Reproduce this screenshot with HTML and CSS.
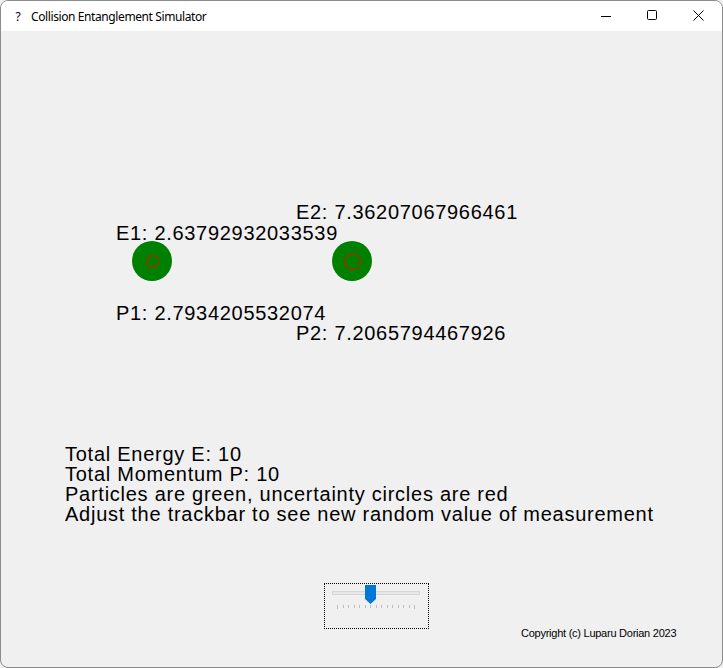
FILE: index.html
```html
<!DOCTYPE html>
<html>
<head>
<meta charset="utf-8">
<link rel="stylesheet" href="styles.css">
</head>
<body>
<div class="window">
  <div class="titlebar">
    <span class="appicon">?</span>
    <span class="title">Collision Entanglement Simulator</span>
    <div class="controls">
      <svg class="ctl" width="46" height="30" viewBox="0 0 46 30"><line x1="17" y1="15.5" x2="27" y2="15.5" stroke="#000" stroke-width="1"/></svg>
      <svg class="ctl" width="46" height="30" viewBox="0 0 46 30"><rect x="17.5" y="9.5" width="9" height="9" rx="1" fill="none" stroke="#000" stroke-width="1"/></svg>
      <svg class="ctl" width="46" height="30" viewBox="0 0 46 30"><path d="M17.5 9.5 L27.5 19.5 M27.5 9.5 L17.5 19.5" stroke="#000" stroke-width="1"/></svg>
    </div>
  </div>
  <div class="client">
    <div class="diagram">
      <div class="label e2">E2: 7.36207067966461</div>
      <div class="label e1">E1: 2.63792932033539</div>
      <div class="particle p-one"><div class="unc unc-one"></div></div>
      <div class="particle p-two"><div class="unc unc-two"></div></div>
      <div class="label m1">P1: 2.7934205532074</div>
      <div class="label m2">P2: 7.2065794467926</div>
    </div>
    <div class="info">
      <div class="line">Total Energy E: 10</div>
      <div class="line">Total Momentum P: 10</div>
      <div class="line">Particles are green, uncertainty circles are red</div>
      <div class="line">Adjust the trackbar to see new random value of measurement</div>
    </div>
    <div class="bottom">
      <div class="trackbar">
        <svg width="105" height="46" viewBox="0 0 105 46">
          <rect x="8.5" y="8.5" width="87" height="3" fill="#e7e7e7" stroke="#d6d6d6" stroke-width="1"/>
          <g stroke="#bdbdbd" stroke-width="1">
            <line x1="13.5" y1="22" x2="13.5" y2="26"/>
            <line x1="19.5" y1="22" x2="19.5" y2="25"/>
            <line x1="24.5" y1="22" x2="24.5" y2="25"/>
            <line x1="30.5" y1="22" x2="30.5" y2="25"/>
            <line x1="35.5" y1="22" x2="35.5" y2="25"/>
            <line x1="41.5" y1="22" x2="41.5" y2="25"/>
            <line x1="46.5" y1="22" x2="46.5" y2="25"/>
            <line x1="52.5" y1="22" x2="52.5" y2="25"/>
            <line x1="57.5" y1="22" x2="57.5" y2="25"/>
            <line x1="63.5" y1="22" x2="63.5" y2="25"/>
            <line x1="68.5" y1="22" x2="68.5" y2="25"/>
            <line x1="74.5" y1="22" x2="74.5" y2="25"/>
            <line x1="79.5" y1="22" x2="79.5" y2="25"/>
            <line x1="85.5" y1="22" x2="85.5" y2="25"/>
            <line x1="90.5" y1="22" x2="90.5" y2="26"/>
          </g>
          <polygon points="41,2 52,2 52,16 46.5,21 41,16" fill="#0078d7"/>
        </svg>
      </div>
      <div class="copyright">Copyright (c) Luparu Dorian 2023</div>
    </div>
  </div>
</div>
</body>
</html>
```
FILE: styles.css
```css
html, body {
  margin: 0;
  padding: 0;
  background: #f0f0f0;
}
.window {
  width: 723px;
  height: 668px;
  box-sizing: border-box;
  border: 1px solid #8c8c8c;
  border-radius: 8px;
  overflow: hidden;
  background: #f0f0f0;
  display: flex;
  flex-direction: column;
}
.titlebar {
  height: 30px;
  background: #ffffff;
  display: flex;
  align-items: center;
  font-family: "Noto Sans", "Open Sans", sans-serif;
  font-size: 12px;
  color: #000;
  flex-shrink: 0;
}
.appicon {
  width: 10px;
  margin-left: 12px;
  margin-right: 8px;
  text-align: center;
}
.title {
  flex: 1;
  letter-spacing: -0.4px;
}
.controls {
  display: flex;
}
.ctl {
  display: block;
}
.client {
  flex: 1;
  display: flex;
  flex-direction: column;
  padding-left: 64px;
  font-family: "Liberation Sans", Arial, sans-serif;
  color: #000;
}
.diagram {
  position: relative;
  height: 413px;
  margin-left: -64px;
}
.label {
  position: absolute;
  font-size: 20px;
  line-height: 20px;
  letter-spacing: 0.7px;
  white-space: nowrap;
}
.e2 { left: 295px; top: 171px; }
.e1 { left: 115px; top: 192px; }
.m1 { left: 115px; top: 272px; }
.m2 { left: 295px; top: 292px; }
.particle {
  position: absolute;
  width: 40px;
  height: 40px;
  border-radius: 50%;
  background: #008000;
  top: 210px;
  display: flex;
  align-items: center;
  justify-content: center;
}
.p-one { left: 131px; }
.p-two { left: 331px; }
.unc {
  border: 1px solid #ff0000;
  border-radius: 50%;
  box-sizing: border-box;
}
.unc-one { width: 13px; height: 13px; }
.unc-two { width: 17px; height: 17px; }
.info {
  font-size: 20px;
  line-height: 20px;
  letter-spacing: 0.74px;
}
.line {
  white-space: nowrap;
}
.bottom {
  display: flex;
  align-items: flex-start;
  margin-top: 59px;
}
.trackbar {
  margin-left: 259px;
  width: 105px;
  height: 46px;
  box-sizing: border-box;
  border: 1px dotted #000;
  position: relative;
}
.trackbar svg {
  position: absolute;
  left: -1px;
  top: -1px;
}
.copyright {
  margin-left: 92px;
  margin-top: 44px;
  font-size: 11px;
  line-height: 13px;
  letter-spacing: -0.25px;
  white-space: nowrap;
}
```
